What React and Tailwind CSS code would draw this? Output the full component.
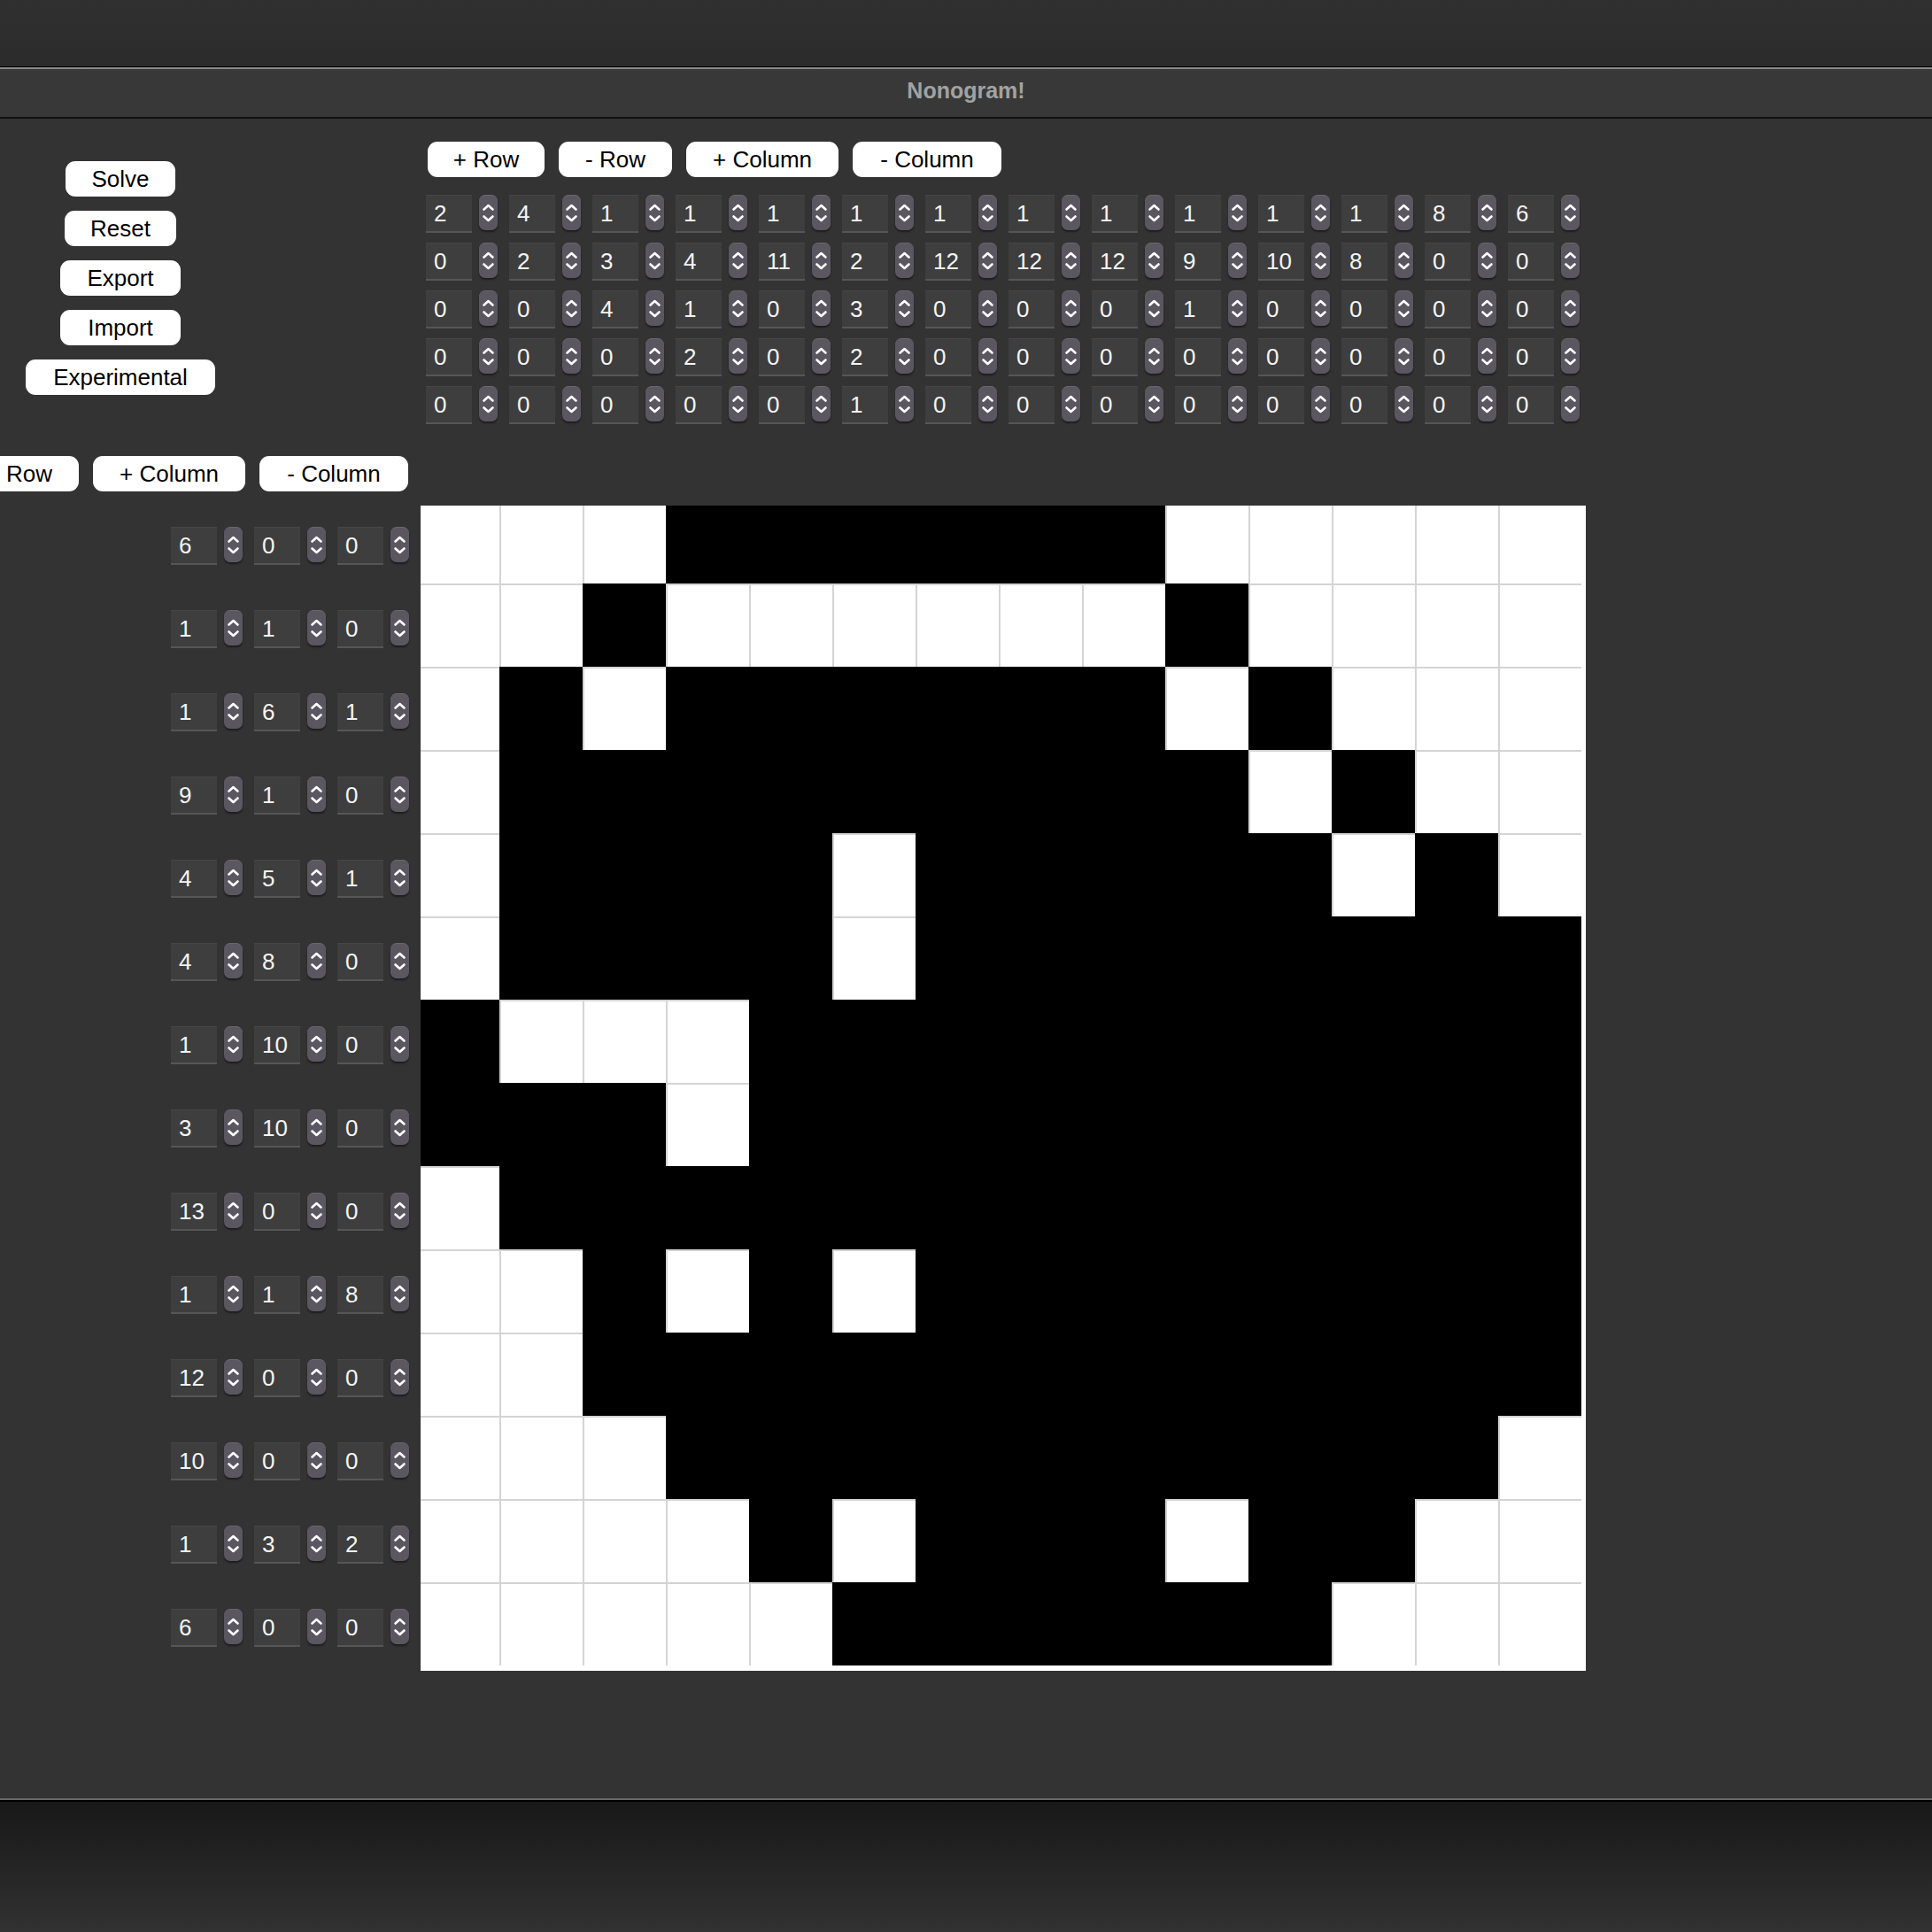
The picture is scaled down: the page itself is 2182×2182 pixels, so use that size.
const font = { fontFamily: '"Liberation Sans", Arial, sans-serif' };

const topClues = [
    [2, 4, 1, 1, 1, 1, 1, 1, 1, 1, 1, 1, 8, 6],
    [0, 2, 3, 4, 11, 2, 12, 12, 12, 9, 10, 8, 0, 0],
    [0, 0, 4, 1, 0, 3, 0, 0, 0, 1, 0, 0, 0, 0],
    [0, 0, 0, 2, 0, 2, 0, 0, 0, 0, 0, 0, 0, 0],
    [0, 0, 0, 0, 0, 1, 0, 0, 0, 0, 0, 0, 0, 0],
];

const leftClues = [
    [6, 0, 0],
    [1, 1, 0],
    [1, 6, 1],
    [9, 1, 0],
    [4, 5, 1],
    [4, 8, 0],
    [1, 10, 0],
    [3, 10, 0],
    [13, 0, 0],
    [1, 1, 8],
    [12, 0, 0],
    [10, 0, 0],
    [1, 3, 2],
    [6, 0, 0],
];

const board = [
    "...######.....",
    "..#......#....",
    ".#.######.#...",
    ".#########.#..",
    ".####.#####.#.",
    ".####.########",
    "#...##########",
    "###.##########",
    ".#############",
    "..#.#.########",
    "..############",
    "...##########.",
    "....#.###.##..",
    ".....######...",
];

const Button = ({ label, width }) => {
    return (
        <button className={`shrink-0 h-[40px] ${width} rounded-[11px] bg-white text-black text-[26px] leading-none flex items-center justify-center`}>
            {label}
        </button>
    );
};

const Spinner = () => {
    return (
        <div className="w-[21px] h-[40px] shrink-0 rounded-[7px] bg-[#5a5761] shadow-[0_2px_2px_rgba(0,0,0,0.45)] border-t border-[#6a6770]">
            <svg width="21" height="39" viewBox="0 0 21 39" fill="none">
                <path d="M5.5 15.5L10.5 11L15.5 15.5" stroke="white" strokeWidth="2.6" strokeLinecap="round" strokeLinejoin="round" />
                <path d="M5.5 23.5L10.5 28L15.5 23.5" stroke="white" strokeWidth="2.6" strokeLinecap="round" strokeLinejoin="round" />
            </svg>
        </div>
    );
};

const NumberField = ({ value }) => {
    return (
        <div className="flex items-start gap-[8px] shrink-0">
            <div className="w-[52px] h-[43px] bg-[#3e3e3e] border-t border-[#464646] border-b-2 border-b-[#565656] text-[#f4f4f4] text-[26px] leading-none pl-[9px] flex items-center">
                {value}
            </div>
            <Spinner />
        </div>
    );
};

const ControlButtons = ({ right }) => {
    return (
        <div className={`flex gap-[16px] ${right ? "justify-end pr-[14px]" : "pl-[8px]"}`}>
            <Button label="+ Row" width="w-[132px]" />
            <Button label="- Row" width="w-[128px]" />
            <Button label="+ Column" width="w-[172px]" />
            <Button label="- Column" width="w-[168px]" />
        </div>
    );
};

const App = () => {
    return (
        <div className="w-[2182px] h-[2182px] overflow-hidden flex flex-col bg-[#333333]" style={font}>
            <div className="h-[75px] bg-gradient-to-b from-[#303030] to-[#2b2b2b]" />
            <div className="h-px bg-black" />
            <div className="h-[2px] bg-[#8a8a8a]" />
            <div className="h-[54px] bg-[#383838] flex items-center justify-center pb-[5px]">
                <span className="text-[25px] font-bold text-[#a2a2a2]">Nonogram!</span>
            </div>
            <div className="h-[2px] bg-[#111111]" />

            <main className="h-[1897px] bg-[#333333] flex flex-col">
                <section className="flex">
                    <div className="w-[475px] shrink-0 pt-[48px]">
                        <div className="w-[272px] flex flex-col items-center gap-[16px]">
                            <Button label="Solve" width="w-[124px]" />
                            <Button label="Reset" width="w-[126px]" />
                            <Button label="Export" width="w-[136px]" />
                            <Button label="Import" width="w-[136px]" />
                            <Button label="Experimental" width="w-[214px]" />
                        </div>
                    </div>
                    <div className="pt-[26px]">
                        <ControlButtons />
                        <div className="mt-[20px] pl-[6px] flex flex-col gap-[11px]">
                            {topClues.map((row, r) => (
                                <div key={r} className="flex gap-[13px]">
                                    {row.map((v, c) => (
                                        <NumberField key={c} value={v} />
                                    ))}
                                </div>
                            ))}
                        </div>
                    </div>
                </section>

                <section className="mt-[36px] w-[475px]">
                    <ControlButtons right />
                </section>

                <section className="mt-[16px] flex">
                    <div className="w-[475px] shrink-0 flex flex-col">
                        {leftClues.map((row, r) => (
                            <div key={r} className="h-[94px] pb-[4px] flex items-center justify-end gap-[13px] pr-[13px]">
                                {row.map((v, c) => (
                                    <NumberField key={c} value={v} />
                                ))}
                            </div>
                        ))}
                    </div>
                    <div className="w-[1316px] h-[1316px] bg-white overflow-hidden">
                        <div className="-ml-[5px] -mt-[6px] flex flex-col">
                            {board.map((row, r) => (
                                <div key={r} className="flex">
                                    {row.split("").map((ch, c) => (
                                        <div
                                            key={c}
                                            className={
                                                ch === "#"
                                                    ? "w-[94px] h-[94px] shrink-0 bg-black border-l-2 border-t-2 border-black"
                                                    : "w-[94px] h-[94px] shrink-0 bg-white border-l-2 border-t-2 border-[#d4d4d4]"
                                            }
                                        />
                                    ))}
                                </div>
                            ))}
                        </div>
                    </div>
                </section>
            </main>

            <div className="h-[2px] bg-[#686868]" />
            <div className="h-[2px] bg-black" />
            <div className="flex-1 bg-gradient-to-b from-[#181818] to-[#323232]" />
        </div>
    );
};

export default App;
